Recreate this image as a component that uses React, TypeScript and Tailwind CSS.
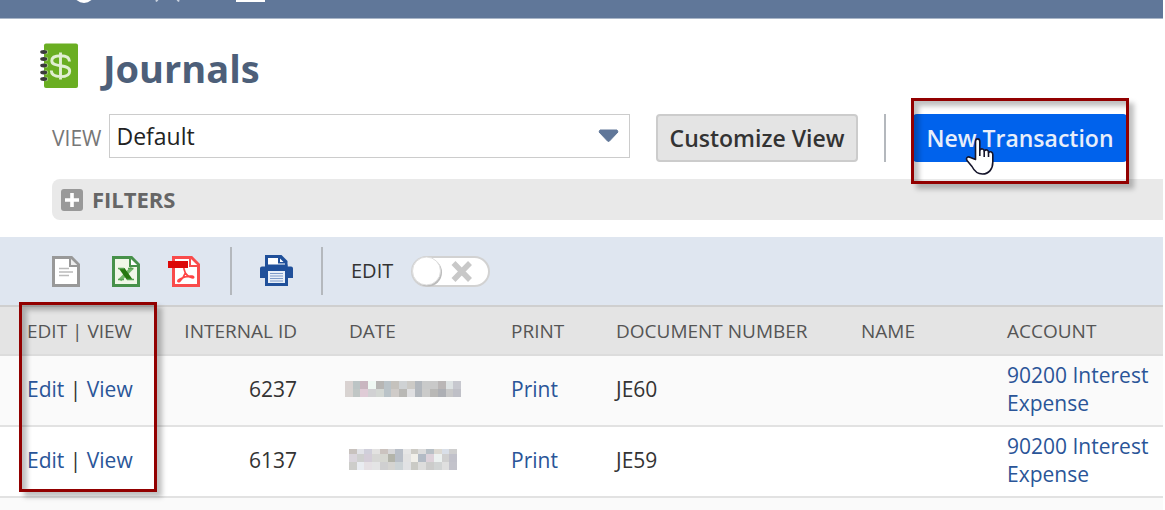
import React from "react";

const mosaicA = [
  ["#d9d2d1", "#bcc4c5", "#c9b6c0", "#eff8f3", "#b7b6b4", "#bac3c8", "#c5c2bd", "#cfd2d4", "#cccac6", "#b2b7bd", "#c9caca", "#c9c9c9", "#bab6b6", "#dde2e3", "#c7c8cf"],
  ["#d8d3d1", "#c0c6c5", "#dfcbd6", "#d1d1d3", "#d3d7d3", "#bac3c8", "#cfcbc8", "#b9b8b5", "#dfdfe1", "#b2b7bd", "#cbcbca", "#b9b8b6", "#adafb4", "#c8c8c8", "#bfc0c7"],
];

const mosaicB = [
  ["#c8c2be", "#e2e3e8", "#d0cfda", "#e3e2e1", "#cbc3bf", "#d7d7d9", "#b9bfc8", "#e6e6e6", "#cdcbc5", "#dcdcdc", "#b8c0c6", "#dcd9d2", "#d9dfe8", "#cecece"],
  ["#dad5dc", "#cfd0cf", "#d4cdd8", "#d7d7d5", "#d6d7d1", "#b3b4aa", "#b9bfc8", "#e2e2e2", "#f1efe9", "#b3bbc5", "#ddd2da", "#ecf1f0", "#d0d0d0", "#c1c1ca"],
  ["#cdcdca", "#e9ecf1", "#e5e0e4", "#e4e4e5", "#cfcfd0", "#d5d4d1", "#ccd3d6", "#e1e2e4", "#cacac5", "#dddddc", "#cccccb", "#d1d4d4", "#dfdfdf", "#c3c3cb"],
];

function Mosaic({ cells, heights, className }: { cells: string[][]; heights: number[]; className: string }) {
  let y = 0;
  const total = heights.reduce((a, b) => a + b, 0);
  return (
    <svg
      className={className}
      viewBox={`0 0 ${cells[0].length * 7.72} ${total}`}
      preserveAspectRatio="none"
      shapeRendering="crispEdges"
      aria-hidden="true"
    >
      {cells.map((row, r) => {
        const top = y;
        y += heights[r];
        return row.map((fill, c) => (
          <rect key={`${r}-${c}`} x={c * 7.72} y={top} width={7.8} height={heights[r]} fill={fill} />
        ));
      })}
    </svg>
  );
}

function JournalIcon() {
  return (
    <svg className="h-[46px] w-[39px] shrink-0" viewBox="0 0 39 46" aria-hidden="true">
      <rect x="4" y="0.5" width="34" height="44.5" rx="2" fill="#6aae22" />
      {[9, 16, 22.5, 29.5, 36].map((cy) => (
        <g key={cy}>
          <circle cx="6" cy={cy} r="2.2" fill="#a9cf7f" />
          <ellipse cx="3.7" cy={cy} rx="3.5" ry="1.9" fill="#3b3b3b" />
        </g>
      ))}
      <path
        d="M29.500 18.500c0-4.200-4-5.800-9-5.800s-8.700 1.600-8.700 5c0 3.600 3.500 4.300 8.700 5.100s9.200 1.500 9.200 5.400c0 3.700-3.900 5.400-9.200 5.400s-9.200-1.800-9.200-6M20.500 9.500v27"
        fill="none"
        stroke="#e1efd2"
        strokeWidth="2.900"
      />
    </svg>
  );
}

function PageShape({ stroke, fill, fold }: { stroke: string; fill: string; fold: string }) {
  return (
    <>
      <path d="M1.500 1.500H19.500L26.500 8.500V29.500H1.500Z" fill={fill} stroke={stroke} strokeWidth="3" />
      <path d="M18 2.500V10H26" fill={fold} stroke={stroke} strokeWidth="2" />
    </>
  );
}

function DocIcon() {
  return (
    <svg className="h-[31px] w-7" viewBox="0 0 28 31" aria-hidden="true">
      <PageShape stroke="#999" fill="#fff" fold="#eee" />
      <path d="M7 12.500H17M7 16H21M7 19.500H17" stroke="#bbb" strokeWidth="1.400" />
    </svg>
  );
}

function ExcelIcon() {
  return (
    <svg className="h-[31px] w-7" viewBox="0 0 28 31" aria-hidden="true">
      <PageShape stroke="#47914a" fill="#f1f7e8" fold="#fff" />
      <path d="M20 12 8 24" stroke="#75b96b" strokeWidth="3.600" />
      <path d="M6.500 12h6l8.500 12h-6Z" fill="#26770f" />
      <path d="M6 12.500h6M16 12.500h5.500M6 23.500h6M15 23.500h7" stroke="#58a252" strokeWidth="1.600" />
    </svg>
  );
}

function PdfIcon() {
  return (
    <svg className="h-[31px] w-8" viewBox="0 0 32 31" aria-hidden="true">
      <g transform="translate(4 0)">
        <PageShape stroke="#f94b4b" fill="#fff" fold="#fff" />
      </g>
      <path
        d="M16.500 11.500c-1.500 0 .5 4 .8 5.500-1.300 3.500-3.500 6.500-5.800 8.500-1.800 1-2.500-1 0-2.300 3.500-2 8.500-3.400 12.500-3 2.600.3 2 2-.2 1.500-3.300-.8-5.200-2.500-6.500-4.700"
        fill="none"
        stroke="#f44"
        strokeWidth="1.700"
      />
      <rect x="0" y="5" width="20" height="7" fill="#dc0808" />
    </svg>
  );
}

function PrinterIcon() {
  return (
    <svg className="h-8 w-[33px]" viewBox="0 0 33 32" aria-hidden="true">
      <path d="M5 0H21.500L27.500 6V12H5Z" fill="#20509a" />
      <path d="M8 3H18V8.500H25V11.500H8Z" fill="#fff" />
      <path d="M20 3.500 23.500 7H20Z" fill="#fff" />
      <path d="M2 11.500H5.500V9.500H27.500V11.500H31Q33 11.500 33 13.500V23H28V31H5V23H0V13.500Q0 11.500 2 11.500Z" fill="#20509a" />
      <rect x="8" y="16" width="17" height="12" fill="#e8eff8" />
      <path d="M10 18.500H23M10 21H23M10 23.500H23M10 26H23" stroke="#7f9cc9" strokeWidth="1.200" />
    </svg>
  );
}

function HandCursor() {
  return (
    <svg className="absolute top-[22px] left-[52px] h-[40px] w-[30px]" viewBox="0 0 30 40" aria-hidden="true">
      <path
        d="M10.500 23.500V5.500C10.500 2 14.800 2 14.800 5.500V14C16.500 12 19 12.800 19.200 15C21.200 13 23.500 14 23.500 16.500C25.500 15 27.800 16 27.800 18.500V26C27.800 33 24 38 17.500 38C12 38 9 34.500 7 30.500L2 24.500C.5 21.500 3 20 5.500 21.500Z"
        fill="#fff"
        stroke="#15152b"
        strokeWidth="1.600"
        strokeLinejoin="round"
      />
      <path d="M14.800 13V20M19.200 15V21M23.500 16.500V21" stroke="#15152b" strokeWidth="1.600" />
    </svg>
  );
}

function Divider() {
  return <span className="h-12 w-0.5 shrink-0 bg-[#b4b8bd]" />;
}

const headCell = "py-0 pr-0 pl-0 text-left font-normal";
const cell = "px-0 pt-0 pb-1";
const link = "text-[#2a5598]";

const rows = [
  { id: "6237", doc: "JE60", cells: mosaicA, heights: [8, 8], mosaic: "h-4 w-[116px] -ml-1", bg: "bg-[#fafafa]" },
  { id: "6137", doc: "JE59", cells: mosaicB, heights: [5, 8, 8], mosaic: "h-[21px] w-[108px]", bg: "bg-white" },
];

export default function App() {
  return (
    <div className="min-h-screen overflow-hidden bg-white pr-0.5 font-['Open_Sans','Noto_Sans',sans-serif] text-[#333]">
      <header className="h-[19px] border-b border-[#a9b6c8] bg-[#607799]">
        <svg className="h-[18px] w-[300px]" viewBox="0 0 300 18" aria-hidden="true">
          <ellipse cx="84" cy="-6" rx="10" ry="9" fill="#fff" />
          <path d="M156 1.500 158 -1M179 1.500 177 -1" stroke="#c8d1df" strokeWidth="2" />
          <rect x="236" y="-2" width="29" height="4" fill="#fff" />
        </svg>
      </header>

      <main>
        <div className="flex h-[95px] items-start gap-6 pt-6 pl-10">
          <JournalIcon />
          <h1 className="text-[38px] leading-[50px] font-bold text-[#4d5f79]">Journals</h1>
        </div>

        <div className="flex h-[65px] items-start pr-9 pl-[52px]">
          <label htmlFor="view" className="mr-2 text-[21px] leading-[48px] text-[#777]">
            VIEW
          </label>
          <div className="relative min-w-0 flex-1">
            <select
              id="view"
              className="block h-11 w-full appearance-none border border-[#ccc] bg-white px-1.5 text-[23px] leading-[42px] text-[#222]"
            >
              <option>Default</option>
            </select>
            <svg className="pointer-events-none absolute top-[15px] right-[11px] h-[13px] w-[21px]" viewBox="0 0 21 13" aria-hidden="true">
              <path d="M2 1H19L20 3 11.500 12Q10.500 13 9.500 12L1 3Z" fill="#607799" stroke="#607799" strokeLinejoin="round" />
            </svg>
          </div>
          <button
            type="button"
            className="mr-[26px] ml-[26px] h-12 w-[202px] shrink-0 rounded border-2 border-[#ccc] bg-[#e4e4e4] text-[23px] leading-[44px] font-semibold text-[#333]"
          >
            Customize View
          </button>
          <Divider />
          <div className="relative ml-[27px] shrink-0">
            <button
              type="button"
              className="block h-12 w-[214px] rounded-sm bg-[#0062ec] text-[23px] leading-[48px] font-semibold text-[#e8eefa]"
            >
              New Transaction
            </button>
            <div className="pointer-events-none absolute -inset-x-0.5 -top-4 -bottom-[22px] border-[3px] border-[#920000] shadow-[5px_5px_5px_rgba(0,0,0,0.25),inset_5px_5px_5px_rgba(0,0,0,0.25)]" />
            <HandCursor />
          </div>
        </div>

        <div className="ml-[52px]">
          <button type="button" className="flex h-[41px] w-full items-center gap-[9px] rounded-l-lg bg-[#e9e9e9] pl-[9px] text-[#666]">
            <svg className="h-[22px] w-[22px]" viewBox="0 0 22 22" aria-hidden="true">
              <rect width="22" height="22" rx="3" fill="#999" />
              <path d="M11 4V18M4 11H18" stroke="#fff" strokeWidth="3.600" />
            </svg>
            <span className="text-[22px] leading-[39px] font-bold">FILTERS</span>
          </button>
        </div>

        <div className="mt-[17px] flex h-[70px] items-center border-b-2 border-[#cfcfcf] bg-[#dfe6f0] pl-[52px]">
          <button type="button" aria-label="Export CSV" className="mr-8">
            <DocIcon />
          </button>
          <button type="button" aria-label="Export Excel" className="mr-7">
            <ExcelIcon />
          </button>
          <button type="button" aria-label="Export PDF" className="mr-[30px]">
            <PdfIcon />
          </button>
          <Divider />
          <button type="button" aria-label="Print list" className="mx-7">
            <PrinterIcon />
          </button>
          <Divider />
          <label className="ml-7 flex items-center gap-[18px] text-xl leading-7">
            EDIT
            <span className="relative">
              <input
                type="checkbox"
                className="block h-[31px] w-[79px] appearance-none rounded-full border-2 border-[#d2d2d2] bg-white"
              />
              <svg className="pointer-events-none absolute inset-0 h-[31px] w-[79px]" viewBox="0 0 79 31" aria-hidden="true">
                <circle cx="17" cy="16.500" r="14" fill="#bbb" />
                <circle cx="15.500" cy="15" r="14" fill="#fff" stroke="#ddd" strokeWidth="1" />
                <path d="M42.500 7 59 24M59 7 42.500 24" stroke="#c8c8c8" strokeWidth="5.500" />
              </svg>
            </span>
          </label>
        </div>

        <div className="relative">
          <table className="w-full table-fixed border-collapse text-[21px] leading-7">
            <colgroup>
              <col className="w-[157px]" />
              <col className="w-[140px]" />
              <col className="w-[214px]" />
              <col className="w-[105px]" />
              <col className="w-[245px]" />
              <col className="w-[146px]" />
              <col />
            </colgroup>
            <thead>
              <tr className="h-12 border-b-2 border-[#dcdcdc] bg-[#e4e4e4] text-[19px] text-[#555]">
                <th className="py-0 pr-0 pl-[27px] text-left font-normal whitespace-nowrap">EDIT | VIEW</th>
                <th className="p-0 text-right font-normal whitespace-nowrap">INTERNAL ID</th>
                <th className="py-0 pr-0 pl-[52px] text-left font-normal">DATE</th>
                <th className={headCell}>PRINT</th>
                <th className={headCell}>DOCUMENT NUMBER</th>
                <th className={headCell}>NAME</th>
                <th className={headCell}>ACCOUNT</th>
              </tr>
            </thead>
            <tbody>
              {rows.map((row) => (
                <tr key={row.id} className={`h-[71px] border-b-2 border-[#e2e2e2] ${row.bg}`}>
                  <td className="pt-0 pr-0 pb-1 pl-[27px] whitespace-nowrap">
                    <a href="#edit" className={link}>Edit</a> | <a href="#view" className={link}>View</a>
                  </td>
                  <td className="px-0 pt-0 pb-1 text-right">{row.id}</td>
                  <td className="pt-0 pr-0 pb-1 pl-[52px]">
                    <Mosaic cells={row.cells} heights={row.heights} className={row.mosaic} />
                  </td>
                  <td className={cell}>
                    <a href="#print" className={link}>Print</a>
                  </td>
                  <td className={cell}>{row.doc}</td>
                  <td className={cell} />
                  <td className={cell}>
                    <a href="#account" className={link}>90200 Interest Expense</a>
                  </td>
                </tr>
              ))}
              <tr className="h-[13px] bg-[#fafafa]">
                <td colSpan={7} className="p-0" />
              </tr>
            </tbody>
          </table>
          <div className="pointer-events-none absolute -top-[5px] left-[19px] h-[190px] w-[138px] border-[3px] border-[#920000] shadow-[5px_5px_5px_rgba(0,0,0,0.25),inset_5px_5px_5px_rgba(0,0,0,0.25)]" />
        </div>
      </main>
    </div>
  );
}
